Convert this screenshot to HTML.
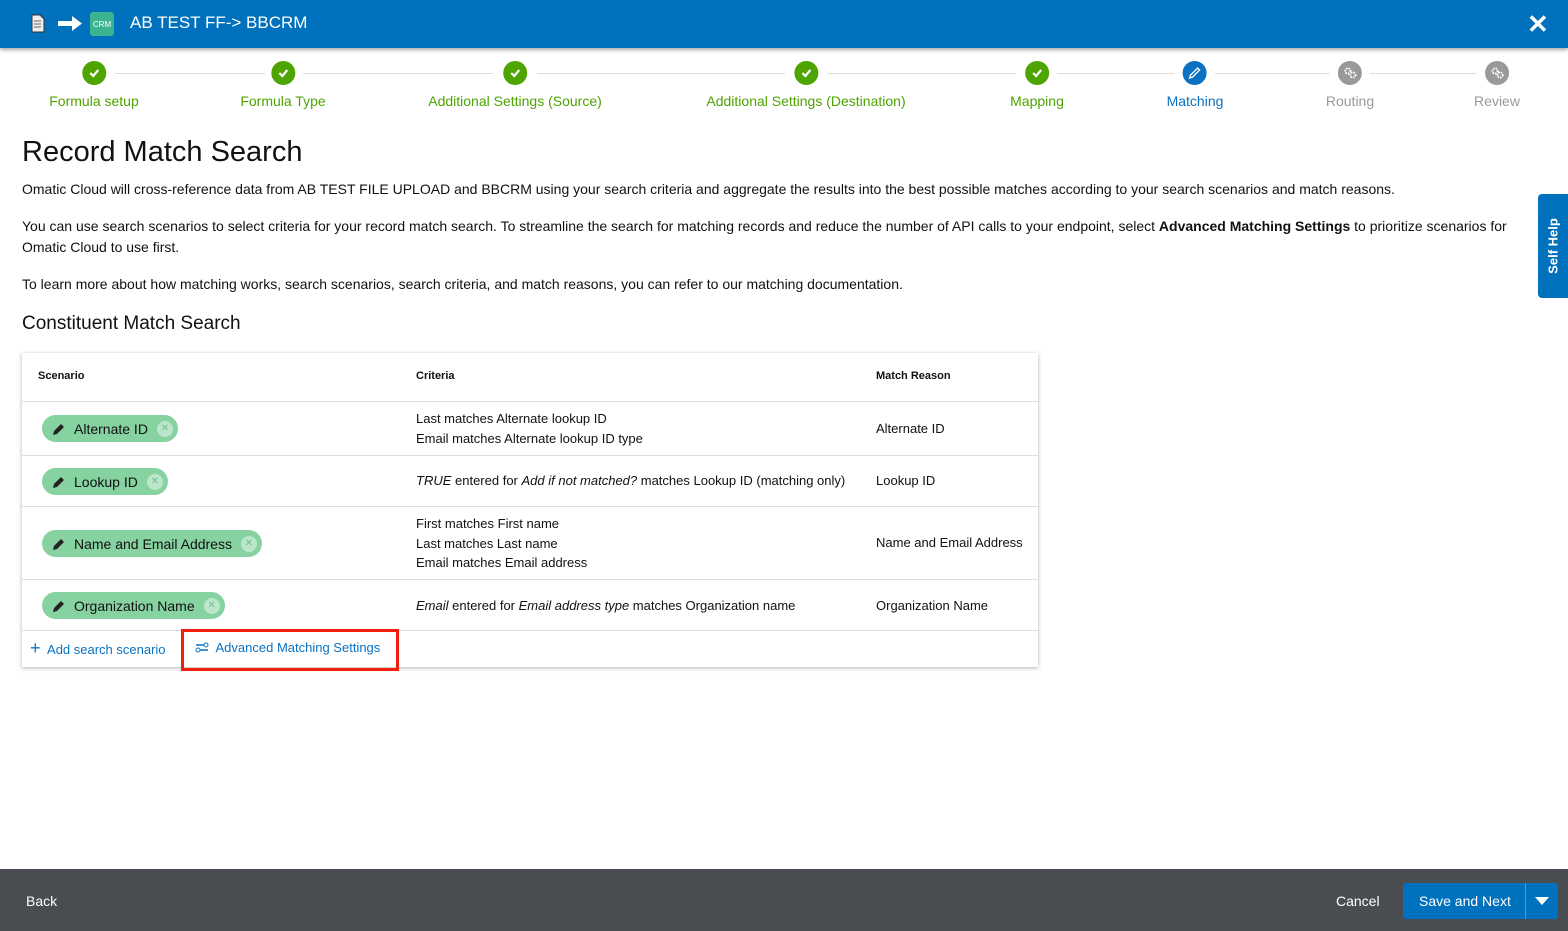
<!DOCTYPE html>
<html><head><meta charset="utf-8"><style>
*{box-sizing:border-box;margin:0;padding:0}
body{width:1568px;height:931px;overflow:hidden;background:#fff;font-family:"Liberation Sans",Arial,sans-serif;color:#111;position:relative}
.top{position:absolute;left:0;top:0;width:1568px;height:48px;background:#0071bc;box-shadow:0 2px 4px rgba(0,0,0,.35);color:#fff}
.top .t{position:absolute;left:130px;top:13px;font-size:17px}
.step{position:absolute;top:61px;transform:translateX(-50%);text-align:center;white-space:nowrap}
.step .c{width:24px;height:24px;border-radius:50%;margin:0 auto;display:flex;align-items:center;justify-content:center}
.step .l{font-size:14px;margin-top:8px}
.g .c{background:#4ea400}.g .l{color:#4ea400}
.line{position:absolute;top:73px;height:1px;background:#ddd}
h1{position:absolute;left:22px;top:136px;font-size:29px;font-weight:400}
p{position:absolute;left:22px;font-size:14px;line-height:21px;width:1490px}
h2{position:absolute;left:22px;top:313px;font-size:19px;font-weight:400}
.tbl{position:absolute;left:22px;top:353px;width:1016px;height:314px;box-shadow:0 1px 4px rgba(0,0,0,.3);background:#fff}
.row{position:absolute;left:0;width:1016px;border-top:1px solid #ddd;font-size:13px}
.cell{position:absolute;line-height:19.5px}
.chip{position:absolute;left:20px;height:27px;border-radius:14px;background:#86d2a0;font-size:14px;display:flex;align-items:center;padding-left:10px;padding-right:5px}
.chip svg{margin-right:8px}
.chip .x{width:16px;height:16px;border-radius:50%;background:rgba(255,255,255,.45);color:#6cc08b;font-size:10px;display:inline-flex;align-items:center;justify-content:center;margin-left:9px}
.sh{position:absolute;left:1538px;top:194px;width:30px;height:104px;background:#0071bc;border-radius:4px 0 0 4px}
.sh span{position:absolute;left:50%;top:50%;transform:translate(-50%,-50%) rotate(-90deg);color:#fff;font-weight:700;font-size:13px;white-space:nowrap}
.foot{position:absolute;left:0;top:869px;width:1568px;height:62px;background:#494c51;color:#fff;font-size:14px}
</style></head><body>
<div class="top">
<svg style="position:absolute;left:31px;top:14px" width="14" height="19"><path d="M1 1h8l4 4v13H1z" fill="#eee" stroke="#333"/><path d="M3 7h7M3 10h7M3 13h7" stroke="#666"/></svg>
<svg style="position:absolute;left:57px;top:15px" width="26" height="17"><path d="M1 6h14V1l10 7.5L15 16v-5H1z" fill="#fff"/></svg>
<div style="position:absolute;left:90px;top:12px;width:24px;height:24px;background:#3cb38f;border-radius:3px;font-size:8px;color:#fff;text-align:center;line-height:26px">CRM</div>
<div class="t">AB TEST FF-&gt; BBCRM</div>
<div style="position:absolute;left:1527px;top:9px;font-size:26px;font-weight:700">✕</div>
</div>
<div class="line" style="left:115px;width:150px"></div>
<div class="line" style="left:303px;width:190px"></div>
<div class="line" style="left:537px;width:248px"></div>
<div class="line" style="left:828px;width:188px"></div>
<div class="line" style="left:1057px;width:117px"></div>
<div class="line" style="left:1215px;width:115px"></div>
<div class="line" style="left:1370px;width:106px"></div>
<div class="step g" style="left:94px"><div class="c"><svg width="14" height="14"><path d="M3 7l3 3 5-6" stroke="#fff" stroke-width="2.2" fill="none"/></svg></div><div class="l">Formula setup</div></div>
<div class="step g" style="left:283px"><div class="c"><svg width="14" height="14"><path d="M3 7l3 3 5-6" stroke="#fff" stroke-width="2.2" fill="none"/></svg></div><div class="l">Formula Type</div></div>
<div class="step g" style="left:515px"><div class="c"><svg width="14" height="14"><path d="M3 7l3 3 5-6" stroke="#fff" stroke-width="2.2" fill="none"/></svg></div><div class="l">Additional Settings (Source)</div></div>
<div class="step g" style="left:806px"><div class="c"><svg width="14" height="14"><path d="M3 7l3 3 5-6" stroke="#fff" stroke-width="2.2" fill="none"/></svg></div><div class="l">Additional Settings (Destination)</div></div>
<div class="step g" style="left:1037px"><div class="c"><svg width="14" height="14"><path d="M3 7l3 3 5-6" stroke="#fff" stroke-width="2.2" fill="none"/></svg></div><div class="l">Mapping</div></div>
<div class="step" style="left:1195px"><div class="c" style="background:#0a72c0"><svg width="14" height="14"><path d="M2 12l1-3 7-7 2 2-7 7z" stroke="#fff" stroke-width="1.3" fill="none"/></svg></div><div class="l" style="color:#0a72c0">Matching</div></div>
<div class="step" style="left:1350px"><div class="c" style="background:#999"><svg width="16" height="16"><circle cx="6" cy="6" r="2.6" fill="none" stroke="#fff" stroke-width="2" stroke-dasharray="1.5 1"/><circle cx="11" cy="10" r="2.6" fill="none" stroke="#fff" stroke-width="2" stroke-dasharray="1.5 1"/></svg></div><div class="l" style="color:#999">Routing</div></div>
<div class="step" style="left:1497px"><div class="c" style="background:#999"><svg width="16" height="16"><circle cx="6" cy="6" r="2.6" fill="none" stroke="#fff" stroke-width="2" stroke-dasharray="1.5 1"/><circle cx="11" cy="10" r="2.6" fill="none" stroke="#fff" stroke-width="2" stroke-dasharray="1.5 1"/></svg></div><div class="l" style="color:#999">Review</div></div>
<h1>Record Match Search</h1>
<p style="top:179px">Omatic Cloud will cross-reference data from AB TEST FILE UPLOAD and BBCRM using your search criteria and aggregate the results into the best possible matches according to your search scenarios and match reasons.</p>
<p style="top:216px">You can use search scenarios to select criteria for your record match search. To streamline the search for matching records and reduce the number of API calls to your endpoint, select <b>Advanced Matching Settings</b> to prioritize scenarios for Omatic Cloud to use first.</p>
<p style="top:274px">To learn more about how matching works, search scenarios, search criteria, and match reasons, you can refer to our matching documentation.</p>
<h2>Constituent Match Search</h2>
<div class="tbl">
<div class="row" style="top:0;height:48px;border:0;font-size:11px;font-weight:700"><div class="cell" style="left:16px;top:14px">Scenario</div><div class="cell" style="left:394px;top:14px">Criteria</div><div class="cell" style="left:854px;top:14px">Match Reason</div></div>
<div class="row" style="top:48px;height:54px"><div class="chip" style="top:13px"><svg width="14" height="14"><path d="M1 13l1-4 7-7 3 3-7 7z" fill="#222"/></svg>Alternate ID<span class="x">✕</span></div><div class="cell" style="left:394px;top:7px">Last matches Alternate lookup ID<br>Email matches Alternate lookup ID type</div><div class="cell" style="left:854px;top:17px">Alternate ID</div></div>
<div class="row" style="top:102px;height:51px"><div class="chip" style="top:12px"><svg width="14" height="14"><path d="M1 13l1-4 7-7 3 3-7 7z" fill="#222"/></svg>Lookup ID<span class="x">✕</span></div><div class="cell" style="left:394px;top:15px"><i>TRUE</i> entered for <i>Add if not matched?</i> matches Lookup ID (matching only)</div><div class="cell" style="left:854px;top:15px">Lookup ID</div></div>
<div class="row" style="top:153px;height:73px"><div class="chip" style="top:23px"><svg width="14" height="14"><path d="M1 13l1-4 7-7 3 3-7 7z" fill="#222"/></svg>Name and Email Address<span class="x">✕</span></div><div class="cell" style="left:394px;top:7px">First matches First name<br>Last matches Last name<br>Email matches Email address</div><div class="cell" style="left:854px;top:26px">Name and Email Address</div></div>
<div class="row" style="top:226px;height:51px"><div class="chip" style="top:12px"><svg width="14" height="14"><path d="M1 13l1-4 7-7 3 3-7 7z" fill="#222"/></svg>Organization Name<span class="x">✕</span></div><div class="cell" style="left:394px;top:16px"><i>Email</i> entered for <i>Email address type</i> matches Organization name</div><div class="cell" style="left:854px;top:16px">Organization Name</div></div>
<div class="row" style="top:277px;height:37px;color:#0a72c0"><div class="cell" style="left:8px;top:8px"><span style="font-size:18px">+</span>&nbsp; Add search scenario</div></div>
</div>
<div style="position:absolute;left:181px;top:629px;width:218px;height:42px;border:3px solid #f01e0a"></div>
<div style="position:absolute;left:195px;top:640px;font-size:13px;color:#0a72c0"><svg width="14" height="12" style="vertical-align:-1px"><path d="M1 4h8M5 9h8" stroke="#0a72c0" stroke-width="1.4"/><circle cx="11" cy="4" r="2" fill="none" stroke="#0a72c0"/><circle cx="3" cy="9" r="2" fill="none" stroke="#0a72c0"/></svg>&nbsp; Advanced Matching Settings</div>
<div class="sh"><span>Self Help</span></div>
<div class="foot">
<div style="position:absolute;left:26px;top:24px">Back</div>
<div style="position:absolute;left:1336px;top:24px">Cancel</div>
<div style="position:absolute;left:1403px;top:14px;width:155px;height:36px;background:#0071bc;border-radius:3px">
<div style="position:absolute;left:16px;top:10px">Save and Next</div>
<div style="position:absolute;left:122px;top:0;width:1px;height:36px;background:#4a9ad6"></div>
<svg style="position:absolute;left:132px;top:14px" width="14" height="9"><path d="M0 0h14L7 8z" fill="#fff"/></svg>
</div>
</div>
</body></html>
